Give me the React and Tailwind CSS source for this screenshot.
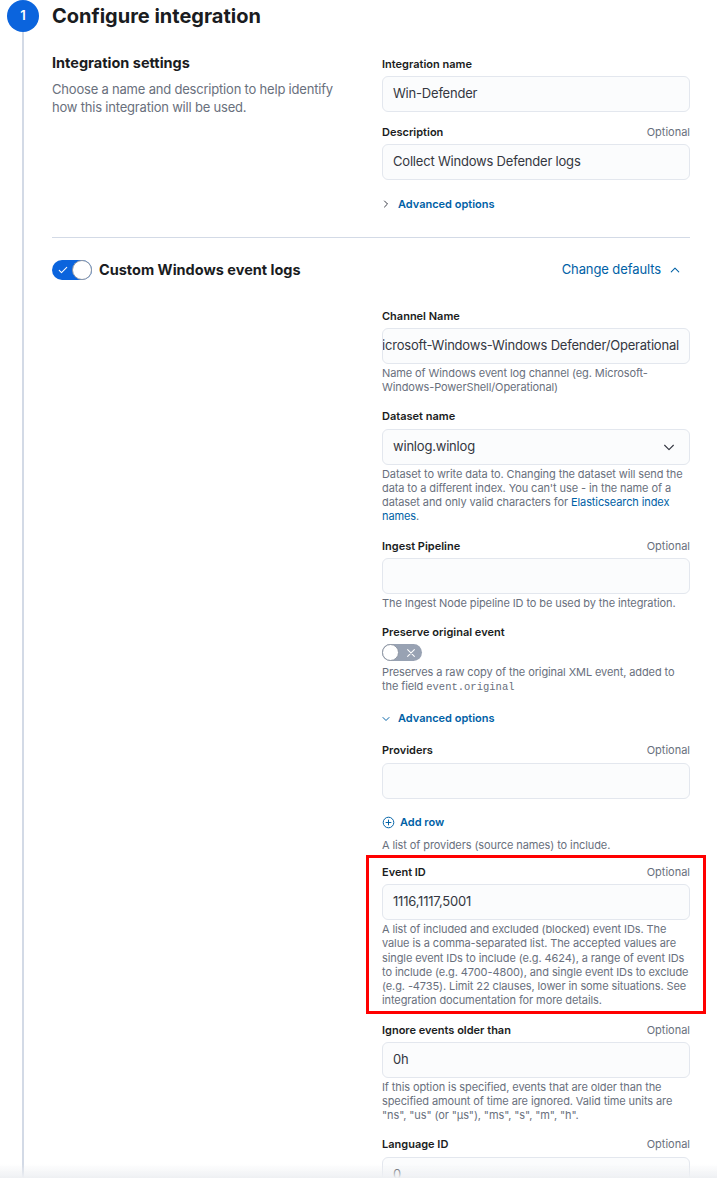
import React from "react";

const Label = ({ children, optional }) => (
  <div className="flex h-5 items-center justify-between">
    <span className="text-[11px] font-semibold text-[#1a1c21]">{children}</span>
    {optional && <span className="text-[11px] text-[#69707d]">Optional</span>}
  </div>
);

const Input = ({ children, className = "" }) => (
  <div
    className={`mt-[2px] flex h-9 items-center overflow-hidden rounded-md border border-[#e3e7ee] bg-[#fbfcfd] px-[10px] text-[13px] tracking-[-0.2px] text-[#343741] ${className}`}
  >
    {children}
  </div>
);

const Help = ({ children }) => (
  <div className="mt-[2px] text-[11px] leading-[14.3px] tracking-[-0.1px] text-[#69707d]">{children}</div>
);

const ChevronRight = () => (
  <svg width="12" height="12" viewBox="0 0 16 16" className="text-[#343741]">
    <path d="M6 4l4 4-4 4" fill="none" stroke="currentColor" strokeWidth="1.3" strokeLinecap="round" strokeLinejoin="round" />
  </svg>
);

const ChevronDownSmall = () => (
  <svg width="12" height="12" viewBox="0 0 16 16" className="text-[#0061a6]">
    <path d="M4 6l4 4 4-4" fill="none" stroke="currentColor" strokeWidth="1.3" strokeLinecap="round" strokeLinejoin="round" />
  </svg>
);

export default function App() {
  return (
    <div className="relative min-h-screen bg-white font-['Inter','Noto_Sans',sans-serif] text-[#343741] antialiased">
      <div className="flex">
        <div className="flex w-[46px] shrink-0 flex-col items-center">
          <div className="flex h-8 w-8 items-center justify-center rounded-full bg-[#0b64dd] text-[13px] font-semibold text-white">
            1
          </div>
          <div className="w-[2px] flex-1 bg-[#d3dae6]" />
        </div>

        <div className="ml-[6px] w-[638px] pb-12">
          <h2 className="h-8 text-[20px] font-bold leading-8 text-[#1a1c21]">Configure integration</h2>

          <div className="mt-[22px] grid grid-cols-[330px_308px]">
            <div>
              <h3 className="text-[14.5px] font-bold leading-[18px] text-[#1a1c21]">Integration settings</h3>
              <p className="mt-2 w-[300px] text-[13px] leading-[18px] tracking-[-0.2px] text-[#69707d]">
                Choose a name and description to help identify how this integration will be used.
              </p>
            </div>
            <div>
              <Label>Integration name</Label>
              <Input>Win-Defender</Input>
              <div className="mt-[10px]">
                <Label optional>Description</Label>
                <Input>Collect Windows Defender logs</Input>
              </div>
              <div className="mt-4 flex h-4 items-center gap-[6px] text-[11px] font-semibold text-[#0061a6]">
                <span className="ml-[-2px] flex w-3 justify-center">
                  <ChevronRight />
                </span>
                <span>Advanced options</span>
              </div>
            </div>
          </div>

          <div className="mt-[25px] h-px bg-[#d3dae6]" />

          <div className="mt-[22px] flex h-5 items-center justify-between">
            <div className="flex items-center gap-[7px]">
              <div className="relative flex h-5 w-10 items-center rounded-full bg-[#0b64dd]">
                <svg width="12" height="12" viewBox="0 0 16 16" className="ml-[5px] text-white">
                  <path d="M3 8.5l3 3 7-7" fill="none" stroke="currentColor" strokeWidth="1.4" strokeLinecap="round" strokeLinejoin="round" />
                </svg>
                <div className="absolute right-0 top-0 h-5 w-5 rounded-full border border-[#8e96a3] bg-white" />
              </div>
              <span className="text-[14.5px] font-bold text-[#1a1c21]">Custom Windows event logs</span>
            </div>
            <div className="flex items-center gap-2 pr-[9px] text-[13px] tracking-[-0.1px] text-[#0061a6]">
              <span>Change defaults</span>
              <svg width="12" height="12" viewBox="0 0 16 16">
                <path d="M3 10.5l5-5 5 5" fill="none" stroke="currentColor" strokeWidth="1.4" strokeLinecap="round" strokeLinejoin="round" />
              </svg>
            </div>
          </div>

          <div className="ml-[330px] mt-[26px] w-[308px]">
            <Label>Channel Name</Label>
            <Input className="justify-end">
              <span className="whitespace-nowrap">Microsoft-Windows-Windows Defender/Operational</span>
            </Input>
            <Help>Name of Windows event log channel (eg. Microsoft-Windows-PowerShell/Operational)</Help>

            <div className="mt-3">
              <Label>Dataset name</Label>
              <Input className="justify-between">
                <span>winlog.winlog</span>
                <svg width="14" height="14" viewBox="0 0 16 16" className="mr-[3px] text-[#343741]">
                  <path d="M3 6l5 5 5-5" fill="none" stroke="currentColor" strokeWidth="1.3" strokeLinecap="round" strokeLinejoin="round" />
                </svg>
              </Input>
              <Help>
                Dataset to write data to. Changing the dataset will send the data to a different index. You can't use - in
                the name of a dataset and only valid characters for{" "}
                <span className="text-[#0061a6]">Elasticsearch index names</span>.
              </Help>
            </div>

            <div className="mt-3">
              <Label optional>Ingest Pipeline</Label>
              <Input />
              <Help>The Ingest Node pipeline ID to be used by the integration.</Help>
            </div>

            <div className="mt-3">
              <Label>Preserve original event</Label>
              <div className="relative mt-[2px] flex h-[17px] w-10 items-center justify-end rounded-full bg-[#98a2b3]">
                <div className="absolute left-0 top-0 h-[17px] w-[17px] rounded-full border border-[#8e96a3] bg-white" />
                <svg width="12" height="12" viewBox="0 0 16 16" className="mr-[5px] text-white">
                  <path d="M3.5 3.5l9 9M12.5 3.5l-9 9" fill="none" stroke="currentColor" strokeWidth="1.4" strokeLinecap="round" />
                </svg>
              </div>
              <div className="mt-[4px] text-[11px] leading-[14.3px] tracking-[-0.1px] text-[#69707d]">
                Preserves a raw copy of the original XML event, added to the field{" "}
                <span className="font-['Liberation_Mono',monospace] text-[10.5px] tracking-normal">event.original</span>
              </div>
            </div>

            <div className="mt-4 flex h-4 items-center gap-[6px] text-[11px] font-semibold text-[#0061a6]">
              <span className="ml-[-2px] flex w-3 justify-center">
                <ChevronDownSmall />
              </span>
              <span>Advanced options</span>
            </div>

            <div className="mt-[14px]">
              <Label optional>Providers</Label>
              <Input />
              <div className="mt-4 flex h-4 items-center gap-[5px] text-[11px] font-semibold text-[#0061a6]">
                <svg width="13" height="13" viewBox="0 0 16 16">
                  <circle cx="8" cy="8" r="6.5" fill="none" stroke="currentColor" strokeWidth="1.2" />
                  <path d="M8 5v6M5 8h6" fill="none" stroke="currentColor" strokeWidth="1.2" strokeLinecap="round" />
                </svg>
                <span>Add row</span>
              </div>
              <div className="mt-[7px] text-[11px] leading-[14.3px] tracking-[-0.1px] text-[#69707d]">
                A list of providers (source names) to include.
              </div>
            </div>

            <div className="relative mt-[10px]">
              <div className="pointer-events-none absolute -bottom-[6px] -left-4 -right-4 -top-[7px] border-[3px] border-[#ff0000]" />
              <Label optional>Event ID</Label>
              <Input>1116,1117,5001</Input>
              <Help>
                A list of included and excluded (blocked) event IDs. The value is a comma-separated list. The accepted
                values are single event IDs to include (e.g. 4624), a range of event IDs to include (e.g. 4700-4800),
                and single event IDs to exclude (e.g. -4735). Limit 22 clauses, lower in some situations. See
                integration documentation for more details.
              </Help>
            </div>

            <div className="mt-3">
              <Label optional>Ignore events older than</Label>
              <Input>0h</Input>
              <Help>
                If this option is specified, events that are older than the specified amount of time are ignored. Valid
                time units are "ns", "us" (or "µs"), "ms", "s", "m", "h".
              </Help>
            </div>

            <div className="mt-3">
              <Label optional>Language ID</Label>
              <Input>0</Input>
            </div>
          </div>
        </div>
      </div>
      <div className="pointer-events-none fixed inset-x-0 bottom-0 h-[14px] bg-gradient-to-b from-white/0 to-[#eef0f3]" />
    </div>
  );
}
